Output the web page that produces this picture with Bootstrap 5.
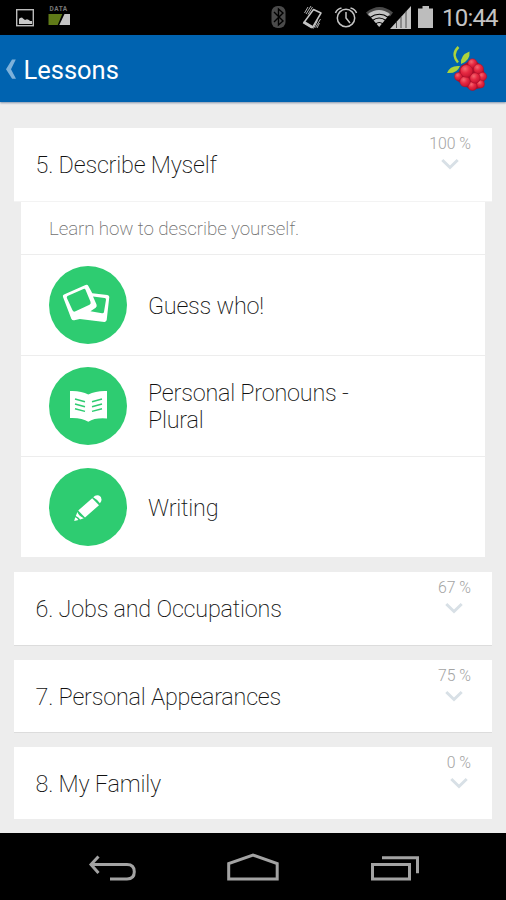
<!DOCTYPE html>
<html lang="en">
<head>
<meta charset="utf-8">
<meta name="viewport" content="width=device-width, initial-scale=1">
<title>Lessons</title>
<link href="https://cdn.jsdelivr.net/npm/bootstrap@5.3.0/dist/css/bootstrap.min.css" rel="stylesheet">
<style>
body{font-family:Roboto,"Noto Sans",sans-serif;background:#ededed;height:900px;overflow:hidden;color:#111}
svg{display:block;flex:none}
.status-bar{height:35px;background:#000}
.data-label{font:700 6.5px/7px Roboto,sans-serif;letter-spacing:.5px;color:#777;padding:6px 0 1px 1.500px}
.clock{font-size:24px;line-height:37px;color:#c4c4c4;width:56px;white-space:nowrap;letter-spacing:-.8px}
.app-bar{height:67px;background:#0063b0;box-shadow:0 1px 2px rgba(0,40,90,.45)}
.app-title{font-size:25.5px;line-height:30px;color:#fff;padding-top:2px;margin-left:-.5px}
.lessons{padding:26px 14px 0;height:731px}
.lesson{height:72.500px;background:#fff;border:0;border-radius:0;box-shadow:0 1px 0 #dcdcdc;margin-bottom:15px;padding:0 21px 0 21.500px}
.lesson.open{margin-bottom:0;box-shadow:none;border-bottom:1px solid #f3f3f3;height:74px}
.lesson.last{height:71.500px;box-shadow:none}
.light{font-weight:200;font-size:23.4px;line-height:27px;white-space:nowrap;padding-top:2px;letter-spacing:-.22px}
.lesson:not(.open) .light{padding-top:3px}
.percent{font-weight:300;font-size:15.800px;line-height:18px;color:#a4a4a4;padding-top:7px}
.units{margin:0 7px 15px;height:355px}
.intro{height:52px;padding:3px 28px 0;font-weight:200;font-size:18.8px;color:#707070;letter-spacing:-.1px}
.units .unit{height:101px;border:0;border-top:1.500px solid #ededed;border-radius:0;padding:0 28px;gap:21px;color:#111}
.disc{width:78px;height:78px;background:#2ecc71}
.nav-keys{height:67px;background:#000}
</style>
<script src="https://cdn.jsdelivr.net/npm/bootstrap@5.3.0/dist/js/bootstrap.bundle.min.js"></script>
</head>
<body>
<header>
  <div class="status-bar d-flex justify-content-between">
    <div class="d-flex">
      <svg width="48" height="35"><rect x="16.7" y="9.7" width="16.6" height="16" fill="none" stroke="#bbb" stroke-width="1.4"/><path d="M19 24v-5l1-1 2-.5 1 1 2 1.500 2-.8 2 .9 1 1h2v2.900z" fill="#c8c8c8"/></svg>
      <div class="d-flex flex-column">
        <span class="data-label">DATA</span>
        <svg width="24" height="14" viewBox="48 14 24 14"><path d="M48.500 14h13.800l-4.600 11h-9.200z" fill="#607a18"/><path d="M64.500 14H70v11H59.300z" fill="#c4c4c4"/></svg>
      </div>
    </div>
    <div class="d-flex">
      <svg width="172" height="35" viewBox="270 0 172 35">
        <rect x="271.500" y="6" width="14" height="22" rx="6" fill="#4a4a4a"/>
        <path d="M274 12l9 9-4.500 4V9l4.500 4-9 9" fill="none" stroke="#000" stroke-width="1.400"/>
        <g fill="none" stroke="#c4c4c4">
          <path d="M313.500 9.500l7.500 3.500-8.500 14.500-8.500-5z" stroke-width="1.500" stroke-linejoin="round"/>
          <path d="M303.500 22l8.700 5.200" stroke-width="3"/>
          <path d="M306 14l5-8M304.500 13l3.500-6M308 14.500l4.500-7.500M320.500 19l-5 8.500M319.500 23l-2.500 5M317.500 20.500l-4 8" stroke-width=".9"/>
          <circle cx="346" cy="18" r="8.700" stroke-width="1.500"/><path d="M346 12v6l4 5" stroke-width="1.500"/>
          <path d="M335.500 13q1.500-4 6-5M356.500 13q-1.500-4-6-5" stroke-width="1.600"/>
        </g>
        <path d="M366 12.500q13.500-11 27 0l-3 4q-10.500-8-21 0z" fill="#4a4a4a"/>
        <path d="M368 14q11-8 22 0l-10.800 13z" fill="#c4c4c4"/>
        <path d="M370 17.500q9.500-6.500 18.500 0M372.500 20.500q6.500-5 13.500 0M375.500 24q3.700-3 7.500 0" fill="none" stroke="#000" stroke-width="1.100"/>
        <path d="M390 29L411 6v23z" fill="#c4c4c4"/><path d="M396.500 22v6M401 17v11M406 11v17" stroke="#333" stroke-width=".8"/>
        <path d="M418 8.500h4.500V6h6.500v2.500h4V28h-15z" fill="#bdbdbd"/>
      </svg>
      <span class="clock me-2">10:44</span>
    </div>
  </div>
  <nav class="app-bar d-flex align-items-center position-relative">
    <svg width="24" height="67" viewBox="0 35 24 67"><path d="M12 59.500h3.800L11 69.300l5 9.500h-3.900L6 69.300z" fill="#7db1da"/></svg>
    <h1 class="app-title fw-normal mb-0 me-auto">Lessons</h1>
    <svg class="me-1" width="62" height="60" viewBox="440 39 62 60">
      <defs><radialGradient id="berry" cx=".38" cy=".32" r=".72"><stop offset="0" stop-color="#f46870"/><stop offset=".48" stop-color="#e62942"/><stop offset="1" stop-color="#c2122e"/></radialGradient></defs>
      <path d="M458.500 47Q451 54 458 62.500" fill="none" stroke="#acd43b" stroke-width="2.400"/>
      <path d="M461 64q-1-9 8.500-12.500 1 9-8.500 12.500zM460 66q-3 8-13 7 3-8 13-7z" fill="#acd43b"/>
      <path d="M461 66l12-7 9 7 4 11-5 11-10 2-15-10z" fill="#a90f2a"/>
      <g fill="url(#berry)" stroke="#a90f2a" stroke-width=".5"><circle cx="472.500" cy="63.500" r="4.700"/><circle cx="478.500" cy="69" r="5"/><circle cx="458.500" cy="76.500" r="4"/><circle cx="482.500" cy="76.500" r="4.200"/><circle cx="480.500" cy="84" r="4"/><circle cx="472.500" cy="86" r="4.500"/><circle cx="465" cy="81.500" r="5.200"/><circle cx="475" cy="78" r="5.200"/><circle cx="466.500" cy="71" r="6.300"/></g>
    </svg>
  </nav>
</header>
<main class="lessons">
  <section class="lesson open card flex-row justify-content-between">
    <h2 class="light mb-0 align-self-center">5. Describe Myself</h2>
    <div class="d-flex flex-column align-items-center"><span class="percent">100 %</span><svg width="18" height="22" viewBox="0 0 18 22"><path d="M1.300 7l7.700 7.500L16.700 7" fill="none" stroke="#d8e0e6" stroke-width="3"/></svg></div>
  </section>
  <div class="units bg-white">
    <p class="intro mb-0 d-flex align-items-center">Learn how to describe yourself.</p>
    <a class="unit list-group-item d-flex align-items-center" href="#">
      <span class="disc rounded-circle"><svg width="78" height="78" viewBox="49 266 78 78"><path fill="#fff" fill-rule="evenodd" d="M64 294.500l21.500-9.500q2-.8 3 1.200l3.800 7 15 1.700q2 .3 2 2.200l-2.600 23q-.4 2-2.400 1.800l-24.500-3-5.500 1.300q-2 .4-3-1.500L63 297q-.7-1.700 1-2.500zm3 3.800l5.500 12q1 2 3 1l14-6.500q1.800-1 1-3l-5-12q-.6-1.500-2-.8l-16 7q-1.200.7-.5 2.300zm26-1.700l3.500 8q.8 2-.8 3.200l-5.200 3.500 11.500 2q1.800.3 2-1.500l2-12q.2-1.500-1.400-1.700z"/></svg></span>
      <span class="light">Guess who!</span>
    </a>
    <a class="unit list-group-item d-flex align-items-center" href="#">
      <span class="disc rounded-circle"><svg width="78" height="78" viewBox="49 367 78 78"><path d="M70 391q11-.5 18.300 3.500Q96 390.500 107 391v27.500q-12-1-18.700 3.300Q82 417.500 70 418z" fill="#fff"/><path d="M75 399l10 2.700M75 404l10 2.700M75 408.700l10 2.700M102 399l-10 2.700M102 404l-10 2.700M102 408.700l-10 2.700" stroke="#2ecc71" stroke-width="1.500"/></svg></span>
      <span class="light">Personal Pronouns -<br>Plural</span>
    </a>
    <a class="unit list-group-item d-flex align-items-center" href="#">
      <span class="disc rounded-circle"><svg width="78" height="78" viewBox="49 468 78 78"><path d="M78.200 510.500l14-12.300 6.800 7-14 12.300zM93.200 497.300q2.300-2.700 5.800-1.700 2.800 1 2.500 4.500 0 1.500-1.600 3.200-2.400-3.600-6.700-6zM77.400 512q.7 3.300 6.400 6.200l-3.600 1.300q-1.500-2.500-4.400-3.500zM75.200 517.200q2 .6 3.200 2.700l-4.200 1z" fill="#fff"/></svg></span>
      <span class="light">Writing</span>
    </a>
  </div>
  <section class="lesson card flex-row justify-content-between">
    <h2 class="light mb-0 align-self-center">6. Jobs and Occupations</h2>
    <div class="d-flex flex-column align-items-center"><span class="percent">67 %</span><svg width="18" height="22" viewBox="0 0 18 22"><path d="M1.300 7l7.700 7.500L16.700 7" fill="none" stroke="#d8e0e6" stroke-width="3"/></svg></div>
  </section>
  <section class="lesson card flex-row justify-content-between">
    <h2 class="light mb-0 align-self-center">7. Personal Appearances</h2>
    <div class="d-flex flex-column align-items-center"><span class="percent">75 %</span><svg width="18" height="22" viewBox="0 0 18 22"><path d="M1.300 7l7.700 7.500L16.700 7" fill="none" stroke="#d8e0e6" stroke-width="3"/></svg></div>
  </section>
  <section class="lesson last card flex-row justify-content-between">
    <h2 class="light mb-0 align-self-center">8. My Family</h2>
    <div class="d-flex flex-column align-items-center"><span class="percent">0 %</span><svg width="18" height="22" viewBox="0 0 18 22"><path d="M1.300 7l7.700 7.500L16.700 7" fill="none" stroke="#d8e0e6" stroke-width="3"/></svg></div>
  </section>
</main>
<footer class="nav-keys d-flex justify-content-center">
  <svg width="506" height="67" viewBox="0 833 506 67" fill="none" stroke="#a3a3a3" stroke-width="3">
    <path d="M98.500 856.500l-7.500 8 7.500 8.500M91 864.500h36q7.300 0 7.300 7.200t-7.300 7.200h-17"/>
    <path d="M228.700 879V863.500l24.300-8.500 24.200 8.500V879z"/>
    <path d="M372.500 864.500h37V879h-37zM382 857.700h35.500v15.500"/>
  </svg>
</footer>
</body>
</html>
